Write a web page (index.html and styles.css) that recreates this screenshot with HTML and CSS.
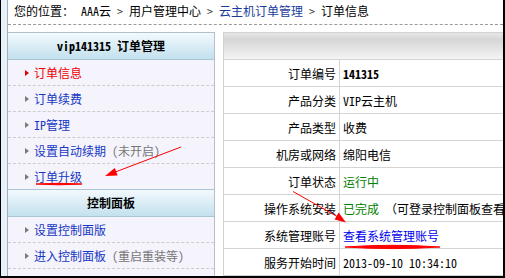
FILE: index.html
```html
<!DOCTYPE html>
<html lang="zh-CN">
<head>
    <meta charset="UTF-8">
    <title>订单信息</title>
    <link rel="stylesheet" href="styles.css">
</head>
<body>
    <div class="frame">
        <div class="strip"></div>
        <div class="page">
            <div class="crumb">您的位置：<span class="gap"></span>AAA云<span class="sep">&gt;</span>用户管理中心<span class="sep">&gt;</span><a class="crumb-link" href="#">云主机订单管理</a><span class="sep">&gt;</span>订单信息</div>

            <div class="main">
                <div class="side">
                    <div class="side-head">vip141315 订单管理</div>
                    <ul class="menu">
                        <li class="on"><a href="#">订单信息</a></li>
                        <li><a href="#">订单续费</a></li>
                        <li><a href="#">IP管理</a></li>
                        <li><a href="#">设置自动续期</a> <span class="note">(未开启)</span></li>
                        <li><a href="#">订单升级</a></li>
                    </ul>
                    <div class="side-head second">控制面板</div>
                    <ul class="menu">
                        <li><a href="#">设置控制面版</a></li>
                        <li><a href="#">进入控制面板</a> <span class="note">(重启重装等)</span></li>
                        <li><a href="#">远程桌面管理</a> <span class="note">(推荐)</span></li>
                    </ul>
                </div>

                <div class="content">
                    <div class="content-head"></div>
                    <table class="info">
                        <tr><td class="label">订单编号</td><td><b>141315</b></td></tr>
                        <tr><td class="label">产品分类</td><td>VIP云主机</td></tr>
                        <tr><td class="label">产品类型</td><td>收费</td></tr>
                        <tr><td class="label">机房或网络</td><td>绵阳电信</td></tr>
                        <tr><td class="label">订单状态</td><td class="green">运行中</td></tr>
                        <tr><td class="label">操作系统安装</td><td><span class="green">已完成</span> （可登录控制面板查看系统管理账号）</td></tr>
                        <tr><td class="label">系统管理账号</td><td><a class="link" href="#">查看系统管理账号</a></td></tr>
                        <tr><td class="label">服务开始时间</td><td>2013-09-10 10:34:10</td></tr>
                    </table>
                </div>
            </div>
        </div>
    </div>

    <!-- red marks drawn over the screenshot -->
    <svg class="marks" width="505" height="278" viewBox="0 0 505 278">
        <line x1="181" y1="147" x2="114" y2="172.5" stroke="#f00" stroke-width="1"/>
        <polygon points="105,176 117.6,175.4 114.8,168" fill="#f00"/>
        <path d="M36,184 Q59,182.6 82,184 Q59,185.6 36,184 Z" fill="#f00" stroke="#f00" stroke-width="1"/>
        <line x1="293" y1="191.5" x2="338" y2="217" stroke="#f00" stroke-width="1"/>
        <polygon points="346,222.5 334.6,219.5 338.6,212.5" fill="#f00"/>
        <path d="M345,247 Q392,243.6 440,247 Q392,250.2 345,247 Z" fill="#f00" stroke="#f00" stroke-width="1"/>
    </svg>
</body>
</html>
```

FILE: styles.css
```css
html, body {
    margin: 0;
    padding: 0;
}
body {
    position: relative;
    width: 505px;
    height: 278px;
    overflow: hidden;
    font-family: "Noto Sans Mono CJK SC", "Noto Sans CJK SC", sans-serif;
    font-size: 12px;
    color: #000;
    background: #fff;
}
a {
    text-decoration: none;
}
.frame {
    display: flex;
    height: 278px;
    box-sizing: border-box;
    border-left: 1px solid #000;
    border-right: 2px solid #000;
    border-bottom: 2px solid #000;
    overflow: hidden;
}
.strip {
    flex: none;
    width: 6px;
    background-color: #e6f1fa;
    border-right: 1px solid #a4acb6;
}
.page {
    flex: 1;
    min-width: 0;
    overflow: hidden;
}
.crumb {
    height: 24px;
    line-height: 22px;
    padding-left: 6px;
    border-bottom: 1px dashed #9a9a9a;
    white-space: nowrap;
}
.crumb .gap {
    display: inline-block;
    width: 7px;
}
.crumb .sep {
    padding: 0 6px;
    color: #333;
}
.crumb-link {
    color: #1a3c9c;
}
.main {
    display: flex;
    gap: 8px;
    margin-top: 7px;
}
.side {
    flex: none;
    width: 206px;
    background-color: #f5f3fc;
    border: 1px solid #b4bfcb;
    border-left: 0;
}
.side-head {
    height: 26px;
    line-height: 26px;
    text-align: center;
    font-weight: bold;
    background: linear-gradient(#f3f9fd, #c2e1ee);
    border-bottom: 1px solid #a9c6d6;
}
.side-head.second {
    border-top: 1px solid #a9c6d6;
}
.menu {
    list-style: none;
    margin: 0;
    padding: 0;
}
.menu li {
    display: flex;
    align-items: center;
    height: 25px;
    padding-left: 17px;
    border-bottom: 1px dashed #cccccc;
    white-space: nowrap;
}
.menu li:last-child {
    border-bottom: 0;
}
.menu li::before {
    content: "";
    width: 0;
    height: 0;
    margin-right: 5px;
    border-left: 4px solid #7a7a7a;
    border-top: 3px solid transparent;
    border-bottom: 3px solid transparent;
}
.menu a {
    color: #1538c2;
}
.menu li.on a {
    color: #ee0000;
}
.menu li.on::before {
    border-left-color: #e00000;
}
.menu .note {
    color: #777;
    margin-left: 6px;
}
.content {
    flex: none;
    width: 420px;
    border: 1px solid #d2d2d2;
    border-right: 0;
}
.content-head {
    height: 26px;
    background: linear-gradient(#e6e6e6, #d6d6d6 25%, #f4f4f4);
    border-bottom: 1px solid #d4d4d4;
}
.info {
    border-collapse: separate;
    border-spacing: 0;
    width: 100%;
}
.info td {
    height: 26px;
    padding: 0 0 0 3px;
    border-bottom: 1px solid #d4d4d4;
    white-space: nowrap;
}
.info td.label {
    width: 112px;
    padding: 0 3px 0 0;
    text-align: right;
    border-right: 1px solid #d4d4d4;
}
.green {
    color: #008000;
}
.link {
    color: #0000ee;
}
.marks {
    position: absolute;
    left: 0;
    top: 0;
    pointer-events: none;
}
```
